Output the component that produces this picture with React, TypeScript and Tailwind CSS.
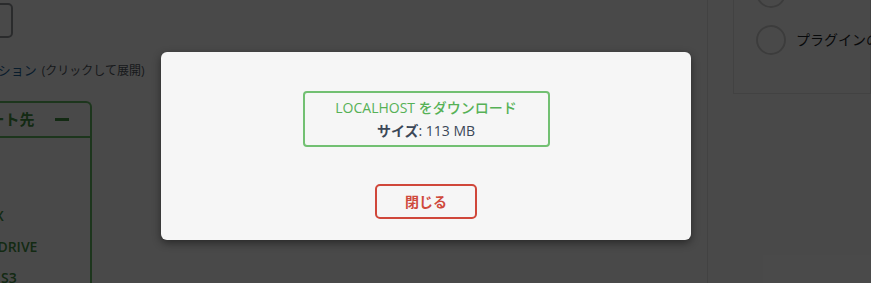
import React from 'react'

const storageItems = ['ローカル', 'FTP', 'DROPBOX', 'GOOGLE DRIVE', 'AMAZON S3']

const RadioRow = ({ label }: { label: string }) => (
  <div className="flex h-[47px] items-center gap-[10px]">
    <span className="h-[30px] w-[30px] shrink-0 rounded-full border-2 border-[#c9c9c9] bg-[#f6f6f6]" />
    <span className="whitespace-nowrap text-[14px] text-[#1d2327]">{label}</span>
  </div>
)

export default function App() {
  return (
    <div className="relative h-[283px] w-full overflow-hidden bg-[#f6f6f6] font-['Open_Sans','Noto_Sans_CJK_JP',sans-serif]">
      {/* page underneath the dialog */}
      <div className="flex h-full">
        <div className="ml-[-80px] flex w-[172px] shrink-0 flex-col">
          <div className="mt-[3px] h-[35px] w-[93px] shrink-0 rounded-[5px] border-2 border-[#8c8f94]" />
          <div className="ml-[-78px] mt-[23px] flex h-[20px] shrink-0 items-center whitespace-nowrap">
            <span className="text-[13px] text-[#1d5f94]">リモートストレージのオプション</span>
            <span className="ml-[5px] text-[12px] text-[#50575e]">(クリックして展開)</span>
          </div>
          <div className="mt-[20px] shrink-0 rounded-t-[6px] border-2 border-b-0 border-[#62b462]">
            <div className="flex h-[35px] items-center justify-between border-b-2 border-[#62b462] pl-[8px] pr-[21px]">
              <span className="whitespace-nowrap text-[15px] font-bold text-[#428c42]">エクスポート先</span>
              <span className="h-[3px] w-[14px] bg-[#428c42]" />
            </div>
            {storageItems.map((item) => (
              <div key={item} className="flex h-[31px] items-center pl-[14px]">
                <span className="whitespace-nowrap text-[14px] font-semibold text-[#428c42]">{item}</span>
              </div>
            ))}
          </div>
        </div>
        <div className="flex-1" />
        <div className="w-[164px] shrink-0 border-l border-[#dedede]">
          <div className="ml-[25px] mt-[-60px] h-[154px] border border-[#dcdcde] pl-[22px] pt-[28px]">
            <RadioRow label="すべてのファイル" />
            <RadioRow label="プラグインのみ" />
          </div>
        </div>
      </div>

      {/* overlay */}
      <div className="absolute inset-0 z-10 bg-black/70" />

      {/* dialog */}
      <div className="absolute left-[161px] top-[52px] z-20 flex h-[188px] w-[530px] flex-col items-center rounded-[6px] bg-[#f6f6f6] pt-[39px] shadow-[0_3px_8px_rgba(0,0,0,0.45)]">
        <div className="flex h-[56px] w-[247px] flex-col items-center justify-center rounded-[4px] border-2 border-[#72c072] leading-[23px]">
          <span className="text-[14px] font-medium text-[#56b156]">LOCALHOST をダウンロード</span>
          <span className="text-[14px] text-[#3c4858]">
            <b className="font-bold">サイズ</b>: 113 MB
          </span>
        </div>
        <button className="mt-[37px] flex h-[35px] w-[102px] items-center justify-center rounded-[5px] border-2 border-[#d0473a] text-[14px] font-semibold text-[#cf4a3c]">
          閉じる
        </button>
      </div>
    </div>
  )
}
